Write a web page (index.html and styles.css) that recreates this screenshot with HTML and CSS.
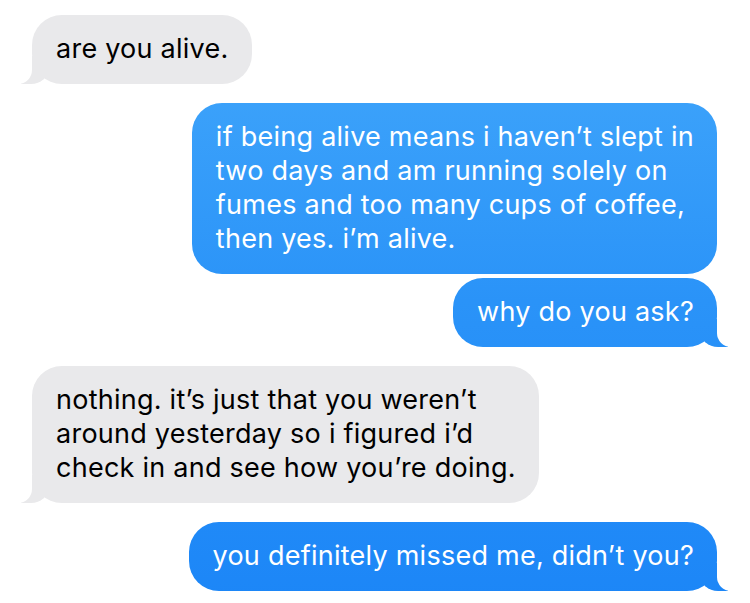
FILE: index.html
```html
<!DOCTYPE html>
<html>
    <head>
        <meta charset="utf-8">
        <title>Messages</title>
        <link rel="stylesheet" href="styles.css">
    </head>
    <body>
        <div id="thread">
            <div class="msg received tail">are you alive.</div>
            <div class="msg sent">if being alive means i haven’t slept in<br>two days and am running solely on<br>fumes and too many cups of coffee,<br>then yes. i’m alive.</div>
            <div class="msg sent tail">why do you ask?</div>
            <div class="msg received tail">nothing. it’s just that you weren’t<br>around yesterday so i figured i’d<br>check in and see how you’re doing.</div>
            <div class="msg sent tail">you definitely missed me, didn’t you?</div>
        </div>
    </body>
</html>
```

FILE: styles.css
```css
html, body {
    height: 100%;
}
body {
    background-color: white;
    margin: 0;
    font-family: Inter, Roboto, "Liberation Sans", sans-serif;
    overflow: hidden;
}

#thread {
    display: flex;
    flex-direction: column;
    align-items: flex-start;
    padding: 15px 33px 0 32px;
}

.msg {
    position: relative;
    margin-top: 19px;
    padding: 17px 23px 18px 24px;
    border-radius: 30px;
    font-size: 27px;
    line-height: 34px;
    letter-spacing: 0.25px;
    white-space: nowrap;
}

.msg:first-child {
    margin-top: 0;
}

.received {
    background-color: #e9e9eb;
    color: black;
}

.sent {
    align-self: flex-end;
    background: linear-gradient(to bottom, #43a8fb 0%, #2a93f8 50%, #1c86f7 100%) fixed;
    color: white;
}

.sent + .sent {
    margin-top: 4px;
}

/* bubble tails */
.tail:before,
.tail:after {
    content: "";
    position: absolute;
    bottom: 0;
    height: 28px;
}

.received.tail:before {
    left: -11px;
    width: 28px;
    background-color: #e9e9eb;
    border-bottom-right-radius: 18px 16px;
}
.received.tail:after {
    left: -28px;
    width: 28px;
    background-color: white;
    border-bottom-right-radius: 14px;
}

.sent.tail:before {
    right: -11px;
    width: 28px;
    background: linear-gradient(to bottom, #43a8fb 0%, #2a93f8 50%, #1c86f7 100%) fixed;
    border-bottom-left-radius: 18px 16px;
}
.sent.tail:after {
    right: -28px;
    width: 28px;
    background-color: white;
    border-bottom-left-radius: 14px;
}
```
